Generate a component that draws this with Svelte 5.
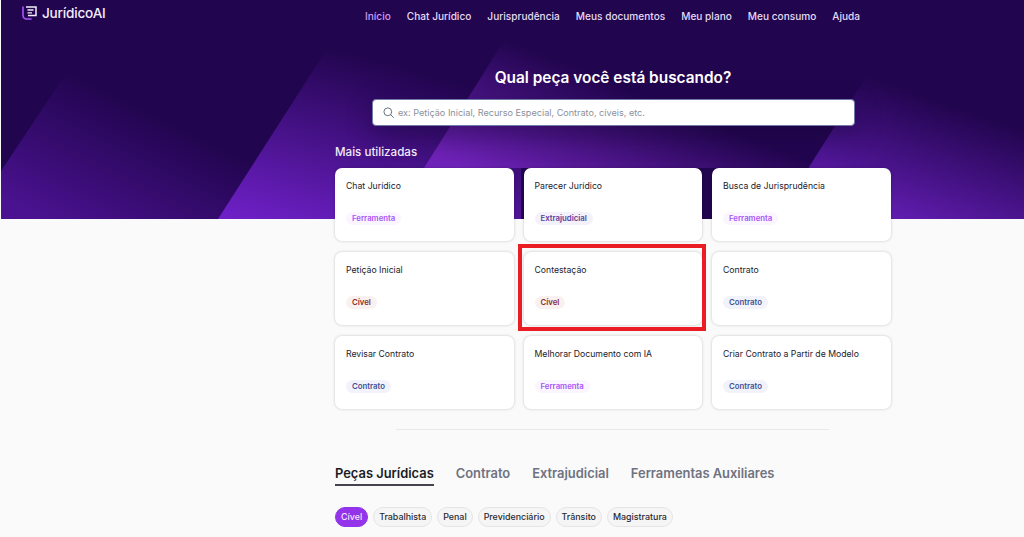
<script lang="ts">
  type Kind = 'tool' | 'extra' | 'civil' | 'contract'
  type Card = { title: string; tag: string; kind: Kind; marked?: boolean }

  const links = ['Início', 'Chat Jurídico', 'Jurisprudência', 'Meus documentos', 'Meu plano', 'Meu consumo', 'Ajuda']
  const cards: Card[] = [
    { title: 'Chat Jurídico', tag: 'Ferramenta', kind: 'tool' },
    { title: 'Parecer Jurídico', tag: 'Extrajudicial', kind: 'extra' },
    { title: 'Busca de Jurisprudência', tag: 'Ferramenta', kind: 'tool' },
    { title: 'Petição Inicial', tag: 'Cível', kind: 'civil' },
    { title: 'Contestação', tag: 'Cível', kind: 'civil', marked: true },
    { title: 'Contrato', tag: 'Contrato', kind: 'contract' },
    { title: 'Revisar Contrato', tag: 'Contrato', kind: 'contract' },
    { title: 'Melhorar Documento com IA', tag: 'Ferramenta', kind: 'tool' },
    { title: 'Criar Contrato a Partir de Modelo', tag: 'Contrato', kind: 'contract' }
  ]
  const tabs = ['Peças Jurídicas', 'Contrato', 'Extrajudicial', 'Ferramentas Auxiliares']
  const areas = ['Cível', 'Trabalhista', 'Penal', 'Previdenciário', 'Trânsito', 'Magistratura']
</script>

<div class="page">
  <svg class="hero-bg" viewBox="0 0 1023 219" preserveAspectRatio="none" aria-hidden="true">
    <defs>
      <linearGradient id="g1" gradientUnits="userSpaceOnUse" x1="80" y1="240" x2="145" y2="110">
        <stop offset="0" stop-color="#4a1290" />
        <stop offset="1" stop-color="#22054f" />
      </linearGradient>
      <linearGradient id="g2" gradientUnits="userSpaceOnUse" x1="250" y1="225" x2="300" y2="40">
        <stop offset="0" stop-color="#6f20c8" />
        <stop offset="1" stop-color="#22054f" />
      </linearGradient>
      <linearGradient id="g3" gradientUnits="userSpaceOnUse" x1="480" y1="175" x2="530" y2="50">
        <stop offset="0" stop-color="#6f22b8" />
        <stop offset="1" stop-color="#22054f" />
      </linearGradient>
      <linearGradient id="g4" gradientUnits="userSpaceOnUse" x1="850" y1="200" x2="890" y2="85">
        <stop offset="0" stop-color="#5f1cad" />
        <stop offset="1" stop-color="#22054f" />
      </linearGradient>
    </defs>
    <rect width="1023" height="219" fill="#22054f" />
    <polygon points="0,171 66,72 300,72 300,219 0,219" fill="url(#g1)" />
    <polygon points="217,219 335,35 520,35 520,219" fill="url(#g2)" />
    <polygon points="423,168 506,36 810,36 810,168" fill="url(#g3)" />
    <polygon points="808,167 865,77 1023,77 1023,219 808,219" fill="url(#g4)" />
  </svg>

  <header>
    <div class="logo">
      <svg width="15" height="14" viewBox="0 0 15 14" fill="none" aria-hidden="true">
        <path d="M1 1v8.500A3.500 3.500 0 0 0 4.500 13H9" stroke="#a855f7" stroke-width="1.600" stroke-linecap="round" />
        <path d="M4 1h10v8.500H6" stroke="#f3eefc" stroke-width="1.500" />
        <path d="M5.500 4h6M5.500 6.800h4.500" stroke="#f3eefc" stroke-width="1.300" />
      </svg>
      <span>JurídicoAI</span>
    </div>
    <nav>
      {#each links as link, i}
        <a href="#top" class:active={i === 0}>{link}</a>
      {/each}
    </nav>
  </header>

  <main>
    <h1>Qual peça você está buscando?</h1>
    <div class="search">
      <svg width="11" height="11" viewBox="0 0 11 11" fill="none" aria-hidden="true">
        <circle cx="4.800" cy="4.800" r="3.900" stroke="#6b7280" />
        <path d="M7.800 7.800l2.600 2.600" stroke="#6b7280" stroke-linecap="round" />
      </svg>
      <span>ex: Petição Inicial, Recurso Especial, Contrato, cíveis, etc.</span>
    </div>

    <h2>Mais utilizadas</h2>
    <section class="grid">
      {#each cards as card}
        <article class="card" class:marked={card.marked}>
          <p>{card.title}</p>
          <span class="tag {card.kind}">{card.tag}</span>
        </article>
      {/each}
    </section>

    <hr />

    <div class="tabs">
      {#each tabs as tab, i}
        <span class="tab" class:active={i === 0}>{tab}</span>
      {/each}
    </div>

    <div class="pills">
      {#each areas as area, i}
        <span class="pill" class:active={i === 0}>{area}</span>
      {/each}
    </div>
  </main>
</div>

<style>
  :global(body) { background: #fafafa; }
  .page { position: relative; height: 537px; overflow: hidden; font-family: Inter, "Liberation Sans", sans-serif; background: #fafafa; }
  .hero-bg { position: absolute; top: 0; left: 1px; width: 1023px; height: 219px; }

  header { position: relative; display: flex; align-items: center; height: 32px; padding-left: 22px; }
  .logo { display: flex; align-items: center; gap: 5px; width: 343px; margin-top: -6px; color: #f3eefc; font-size: 13.600px; font-weight: 500; letter-spacing: -0.2px; }
  nav { display: flex; gap: 16px; }
  nav a { color: #e4dcf2; font-size: 10.100px; font-weight: 500; text-decoration: none; }
  nav a.active { color: #c79cf5; }

  main { position: relative; display: flex; flex-direction: column; width: 556px; margin-left: 335px; }
  h1 { align-self: center; margin: 34px 0 0; color: #fff; font-size: 15.400px; line-height: 24px; font-weight: 600; }
  .search { display: flex; align-items: center; gap: 4px; box-sizing: border-box; width: 483px; height: 27px; margin: 9px 0 0 37px; padding-left: 10px; border: 1px solid #6f7aa8; border-radius: 4px; background: #fff; box-shadow: 0 8px 26px rgba(20, 4, 50, 0.4); color: #8b8f99; font-size: 9.100px; font-weight: 400; }
  h2 { margin: 17px 0 0; color: #f1eafa; font-size: 11.600px; line-height: 18px; font-weight: 500; }

  .grid { display: grid; grid-template-columns: repeat(3, 178.500px); grid-auto-rows: 73px; gap: 11px 10px; margin-top: 7px; }
  .card { position: relative; display: flex; flex-direction: column; align-items: flex-start; justify-content: space-between; box-sizing: border-box; padding: 11px 11px 16px; border-radius: 7px; background: #fff; box-shadow: 0 0 3px rgba(0, 0, 0, 0.22); }
  .card p { margin: 0; color: #22222c; font-size: 8.700px; line-height: 14px; font-weight: 400; }
  .card.marked::after { content: ""; position: absolute; top: -8px; right: -4px; bottom: -6px; left: -6px; border: 4px solid #ea1c24; }
  .tag { padding: 0 6px; border-radius: 7px; font-size: 7.800px; line-height: 13px; font-weight: 600; }
  .tool { color: #a855f7; background: #faf5ff; }
  .extra { color: #5b3f9e; background: #f3f1fa; }
  .civil { color: #8a2f2f; background: #f9f1ef; }
  .contract { color: #3f5296; background: #f2f3fa; }

  hr { width: 433px; height: 1px; margin: 20px 0 0 61px; border: 0; background: #e9e9ec; }

  .tabs { display: flex; gap: 22px; margin-top: 35px; }
  .tab { padding-bottom: 1px; border-bottom: 2px solid transparent; color: #6f7280; font-size: 12.900px; line-height: 18px; font-weight: 600; }
  .tab.active { color: #1a1a24; border-bottom-color: #44444f; }

  .pills { display: flex; gap: 5px; margin-top: 21px; }
  .pill { box-sizing: border-box; height: 20px; padding: 0 5px; border: 1px solid #e5e5e8; border-radius: 10px; background: #f5f5f6; color: #2a2a33; font-size: 8.900px; line-height: 18px; font-weight: 500; }
  .pill.active { border-color: #9333ea; background: #9333ea; color: #f3e8ff; }
</style>
